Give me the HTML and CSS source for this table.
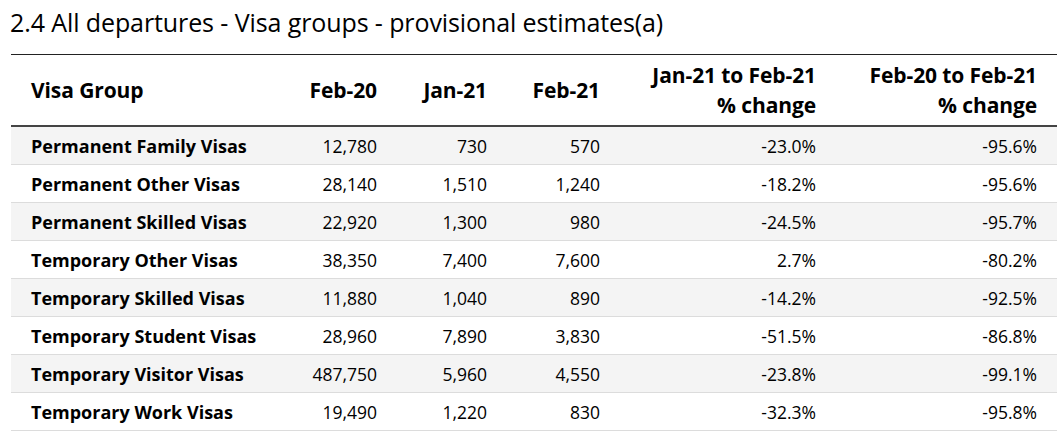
FILE: index.html
```html
<!DOCTYPE html>
<html>
<head>
<meta charset="utf-8">
<link rel="stylesheet" href="styles.css">
</head>
<body>
<h2 class="title">2.4 All departures - Visa groups - provisional estimates(a)</h2>
<table class="data">
  <colgroup>
    <col class="c1"><col class="c2"><col class="c3"><col class="c4"><col class="c5"><col class="c6">
  </colgroup>
  <thead>
    <tr>
      <th class="left">Visa Group</th>
      <th>Feb-20</th>
      <th>Jan-21</th>
      <th>Feb-21</th>
      <th>Jan-21 to Feb-21<br>% change</th>
      <th>Feb-20 to Feb-21<br>% change</th>
    </tr>
  </thead>
  <tbody>
    <tr><td class="left">Permanent Family Visas</td><td>12,780</td><td>730</td><td>570</td><td>-23.0%</td><td>-95.6%</td></tr>
    <tr><td class="left">Permanent Other Visas</td><td>28,140</td><td>1,510</td><td>1,240</td><td>-18.2%</td><td>-95.6%</td></tr>
    <tr><td class="left">Permanent Skilled Visas</td><td>22,920</td><td>1,300</td><td>980</td><td>-24.5%</td><td>-95.7%</td></tr>
    <tr><td class="left">Temporary Other Visas</td><td>38,350</td><td>7,400</td><td>7,600</td><td>2.7%</td><td>-80.2%</td></tr>
    <tr><td class="left">Temporary Skilled Visas</td><td>11,880</td><td>1,040</td><td>890</td><td>-14.2%</td><td>-92.5%</td></tr>
    <tr><td class="left">Temporary Student Visas</td><td>28,960</td><td>7,890</td><td>3,830</td><td>-51.5%</td><td>-86.8%</td></tr>
    <tr><td class="left">Temporary Visitor Visas</td><td>487,750</td><td>5,960</td><td>4,550</td><td>-23.8%</td><td>-99.1%</td></tr>
    <tr><td class="left">Temporary Work Visas</td><td>19,490</td><td>1,220</td><td>830</td><td>-32.3%</td><td>-95.8%</td></tr>
  </tbody>
</table>
</body>
</html>
```
FILE: styles.css
```css
html, body {
  margin: 0;
  padding: 0;
  background: #fff;
}
body {
  font-family: "Open Sans", "Noto Sans", sans-serif;
  color: #000;
  padding: 0 3px 0 11px;
}
.title {
  margin: 0 0 0 -1px;
  padding: 5px 0 0 0;
  font-size: 25px;
  font-weight: 400;
  line-height: 34px;
  height: 49px;
  letter-spacing: -0.1px;
}
.data {
  width: 1046px;
  border-collapse: collapse;
  table-layout: fixed;
  border-top: 1px solid #222;
}
.c1 { width: 276px; }
.c2 { width: 110px; }
.c3 { width: 110px; }
.c4 { width: 113px; }
.c5 { width: 216px; }
.c6 { width: 221px; }
th, td {
  text-align: right;
  padding: 0 20px 0 0;
  white-space: nowrap;
}
.left {
  text-align: left;
  padding: 0 0 0 20px;
}
th {
  font-size: 21px;
  font-weight: 700;
  line-height: 30px;
  height: 70px;
  border-bottom: 2px solid #444;
  vertical-align: middle;
  letter-spacing: -0.1px;
}
td {
  font-size: 17.5px;
  height: 37px;
  line-height: 22px;
  border-bottom: 1px solid #dcdcdc;
}
td.left {
  font-size: 18px;
  font-weight: 700;
}
tbody tr:nth-child(odd) td {
  background: #f4f4f4;
}
```
